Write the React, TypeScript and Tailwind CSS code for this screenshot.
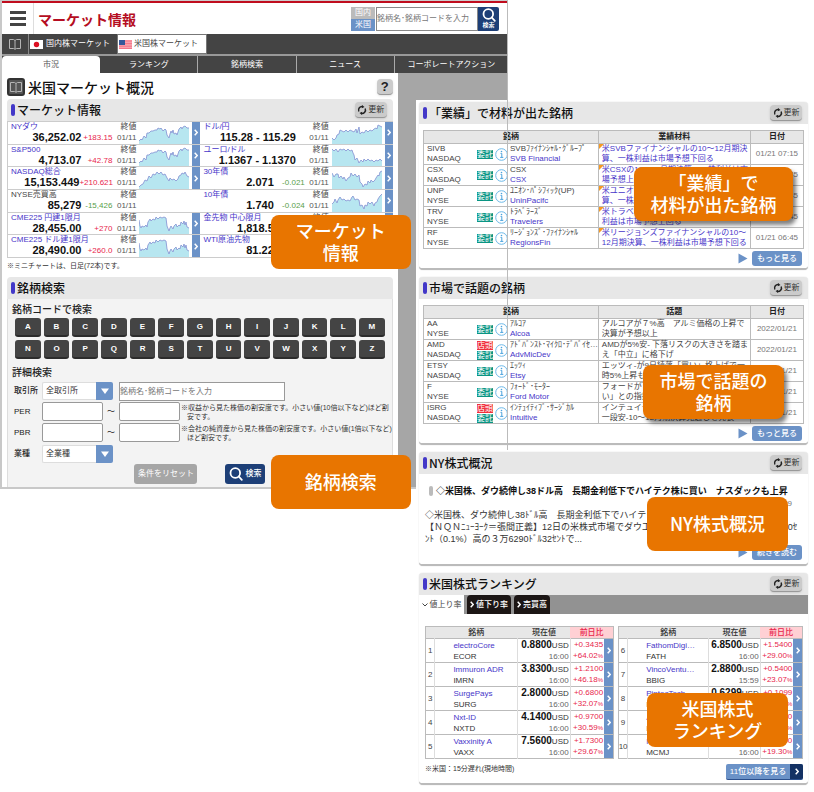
import type { ReactNode } from 'react'

const charts = {
  dow: '0,17 2,15 3,16 5,12 7,14 8,9 10,9 12,7 14,7 16,6 18,6 19,4 21,5 22,4 24,7 26,5 27,6 28,11 30,14 31,10 32,7 33,9 34,6 35,10 37,9 38,11 40,5 42,3 43,5 44,3 46,2 48,4 50,4',
  nasdaq: '0,18 2,16 4,15 6,11 8,12 10,7 12,9 14,5 16,6 18,3 20,5 22,3 24,6 26,5 28,9 30,12 31,9 33,11 35,10 37,12 39,10 40,7 42,6 43,4 45,5 46,3 48,7 50,8',
  cme: '0,6 1,12 2,14 3,12 5,13 7,11 8,13 9,8 11,5 12,7 14,5 16,6 17,3 19,5 21,3 23,4 25,3 27,4 28,12 30,17 31,14 32,12 34,15 35,12 37,10 38,13 40,11 41,12 42,8 44,10 45,7 46,11 47,8 48,13 50,14',
  usdjpy: '0,14 2,16 4,14 5,11 7,10 8,6 10,7 12,8 14,6 16,8 18,6 20,7 22,8 24,5 25,9 27,3 28,10 30,8 32,9 34,6 36,8 38,6 40,7 42,5 44,4 45,5 46,1 48,2 50,3',
  eurusd: '0,3 2,5 4,3 6,6 8,3 10,4 12,3 14,5 16,3 18,5 20,4 21,7 22,9 23,14 25,12 27,17 29,14 31,16 32,13 34,15 36,13 38,15 40,14 42,16 44,14 46,15 48,13 50,15',
  bond30: '0,4 2,8 4,5 6,5 7,9 9,7 11,10 12,8 14,12 16,9 18,8 19,4 21,7 23,5 25,8 27,6 28,13 30,15 31,18 33,15 35,16 36,12 38,14 39,11 41,13 43,11 44,9 46,6 47,7 48,3 50,2',
  bond10: '0,12 2,10 3,7 5,11 6,8 8,5 10,8 12,7 14,9 16,8 18,9 20,5 21,4 23,8 25,7 27,8 28,14 30,13 32,17 33,13 35,14 36,10 38,12 40,10 42,14 43,11 45,10 46,7 48,4 50,2',
}

const indices = [
  { name: 'NYダウ', value: '36,252.02', diff: '+183.15', chart: charts.dow },
  { name: 'S&P500', value: '4,713.07', diff: '+42.78', chart: charts.dow },
  { name: 'NASDAQ総合', value: '15,153.449', diff: '+210.621', chart: charts.nasdaq },
  { name: 'NYSE売買高', value: '85,279', diff: '-15,426', chart: '' },
  { name: 'CME225 円建1限月', value: '28,455.00', diff: '+270', chart: charts.cme },
  { name: 'CME225 ドル建1限月', value: '28,490.00', diff: '+260.0', chart: charts.cme },
]

const rates = [
  { name: 'ドル/円', value: '115.28 - 115.29', diff: '', chart: charts.usdjpy },
  { name: 'ユーロ/ドル', value: '1.1367 - 1.1370', diff: '', chart: charts.eurusd },
  { name: '30年債', value: '2.071', diff: '-0.021', chart: charts.bond30 },
  { name: '10年債', value: '1.740', diff: '-0.024', chart: charts.bond10 },
  { name: '金先物 中心限月', value: '1,818.5', diff: '+19.7', chart: charts.dow },
  { name: 'WTI原油先物', value: '81.22', diff: '+2.99', chart: charts.dow },
]

const earnings = [
  { code: 'SIVB', market: 'NASDAQ', otc: false, kana: 'SVBﾌｧｲﾅﾝｼｬﾙ･ｸﾞﾙｰﾌﾟ', name: 'SVB Financial', news: ['米SVBファイナンシャルの10～12月期決', '算、一株利益は市場予想下回る'], date: '01/21 07:15' },
  { code: 'CSX', market: 'NASDAQ', otc: false, kana: 'CSX', name: 'CSX', news: ['米CSXの10～12月期決算、一株利益は市', '場予想上回る'], date: '01/21 06:45' },
  { code: 'UNP', market: 'NYSE', otc: false, kana: 'ﾕﾆｵﾝ･ﾊﾟｼﾌｨｯｸ(UP)', name: 'UninPacifc', news: ['米ユニオン・パシフィックの10～12月期決', '算、一株利益は市場予想上回る'], date: '01/21 06:45' },
  { code: 'TRV', market: 'NYSE', otc: false, kana: 'ﾄﾗﾍﾞﾗｰｽﾞ', name: 'Travelers', news: ['米トラベラーズの10～12月期決算、一株', '利益は市場予想上回る'], date: '01/21 06:45' },
  { code: 'RF', market: 'NYSE', otc: false, kana: 'ﾘｰｼﾞｮﾝｽﾞ･ﾌｧｲﾅﾝｼｬﾙ', name: 'RegionsFin', news: ['米リージョンズファイナンシャルの10～', '12月期決算、一株利益は市場予想下回る'], date: '01/21 06:45' },
]

const topics = [
  { code: 'AA', market: 'NYSE', otc: false, kana: 'ｱﾙｺｱ', name: 'Alcoa', news: ['アルコアが７%高　アルミ価格の上昇で', '決算が予想以上'], date: '2022/01/21' },
  { code: 'AMD', market: 'NASDAQ', otc: true, kana: 'ｱﾄﾞﾊﾞﾝｽﾄ･ﾏｲｸﾛ･ﾃﾞﾊﾞｲｾ…', name: 'AdvMicDev', news: ['AMDが5%安- 下落リスクの大きさを踏ま', 'え「中立」に格下げ'], date: '2022/01/21' },
  { code: 'ETSY', market: 'NASDAQ', otc: false, kana: 'ｴｯﾂｨ', name: 'Etsy', news: ['エッツィ-が9日続落「買い」格上げで一', '時5%上昇も'], date: '2022/01/21' },
  { code: 'F', market: 'NYSE', otc: false, kana: 'ﾌｫｰﾄﾞ･ﾓｰﾀｰ', name: 'Ford Motor', news: ['フォードが下落「株価は割高で買えな', 'い」との指摘'], date: '2022/01/21' },
  { code: 'ISRG', market: 'NASDAQ', otc: true, kana: 'ｲﾝﾃｭｲﾃｨﾌﾞ･ｻｰｼﾞｶﾙ', name: 'Intuitive', news: ['インテュイティブが大幅安、売上高が', '一段安-10～12月期決算見通しを発表'], date: '2022/01/21' },
]

const gainersLeft = [
  { rank: 1, name: 'electroCore', code: 'ECOR', price: '0.8800', time: '16:00', diff: '+0.3435', pct: '+64.02' },
  { rank: 2, name: 'Immuron ADR', code: 'IMRN', price: '3.8300', time: '16:00', diff: '+1.2100', pct: '+46.18' },
  { rank: 3, name: 'SurgePays', code: 'SURG', price: '2.8000', time: '16:00', diff: '+0.6800', pct: '+32.07' },
  { rank: 4, name: 'Nxt-ID', code: 'NXTD', price: '4.1400', time: '16:00', diff: '+0.9700', pct: '+30.59' },
  { rank: 5, name: 'Vaxxinity A', code: 'VAXX', price: '7.5600', time: '16:00', diff: '+1.7300', pct: '+29.67' },
]

const gainersRight = [
  { rank: 6, name: 'FathomDigi…', code: 'FATH', price: '6.8500', time: '16:00', diff: '+1.5400', pct: '+29.00' },
  { rank: 7, name: 'VincoVentu…', code: 'BBIG', price: '2.8800', time: '15:59', diff: '+0.5400', pct: '+23.07' },
  { rank: 8, name: 'PintecTech', code: 'PT', price: '0.6299', time: '16:00', diff: '+0.1099', pct: '+21.13' },
  { rank: 9, name: 'Akerna', code: 'KERN', price: '1.5500', time: '16:00', diff: '+0.2600', pct: '+20.15' },
  { rank: 10, name: 'Merida', code: 'MCMJ', price: '6.8000', time: '16:00', diff: '+1.1000', pct: '+19.30' },
]

function BookIcon() {
  return (
    <svg width="14" height="12" viewBox="0 0 14 12" fill="none" stroke="#b5b5b5" strokeWidth="1">
      <path d="M1.5 1.5H5.5L7 2.5L8.5 1.5H12.5V10.5H8.5L7 11.3L5.5 10.5H1.5Z" />
      <path d="M7 2.5V11" />
    </svg>
  )
}

function Chevron() {
  return (
    <svg width="4" height="7" viewBox="0 0 4 7" fill="none" stroke="currentColor" strokeWidth="1.5">
      <path d="M0.7 0.8L3.2 3.5L0.7 6.2" />
    </svg>
  )
}

function SearchIcon({ size }: { size: number }) {
  return (
    <svg width={size} height={size} viewBox="0 0 14 14" fill="none" stroke="white" strokeWidth="1.8" strokeLinecap="round">
      <circle cx="6.3" cy="6" r="4.8" />
      <path d="M9.8 9.5L12.8 12.8" />
    </svg>
  )
}

function InfoIcon() {
  return (
    <svg width="13" height="13" viewBox="0 0 13 13" className="shrink-0">
      <circle cx="6.5" cy="6.5" r="5.8" fill="white" stroke="#6bb8e8" strokeWidth="1" />
      <path d="M5.5 5.4H6.8V9.3M5.2 9.4H8.3" stroke="#4aa3dd" strokeWidth="1" fill="none" />
      <circle cx="6.5" cy="3.5" r="0.8" fill="#4aa3dd" />
    </svg>
  )
}

function RefreshButton() {
  return (
    <button className="flex h-4 w-8 items-center justify-center gap-px rounded-sm border-b border-[#999] bg-[#cbcbcb] text-[8px] leading-none text-[#333] shadow-sm">
      <svg width="10" height="10" viewBox="0 0 12 12" fill="none" stroke="#222" strokeWidth="1.8">
        <path d="M2.2 7.8A4.2 4.2 0 0 1 7 2" />
        <path d="M9.8 4.2A4.2 4.2 0 0 1 5 10" />
        <path d="M6 0L9 2.4L5.8 4Z" fill="#222" stroke="none" />
        <path d="M6 12L3 9.6L6.2 8Z" fill="#222" stroke="none" />
      </svg>
      更新
    </button>
  )
}

function SectionHeader({ title }: { title: string }) {
  return (
    <div className="flex h-[22px] items-center rounded-t-sm bg-[#e7e7e7] pr-1.5 pl-1">
      <span className="mr-0.5 h-3 w-1 rounded-sm bg-[#4338c8]" />
      <h2 className="flex-1 font-['Noto_Sans_CJK_JP',sans-serif] text-[12px] leading-none font-medium text-[#111]">{title}</h2>
      <RefreshButton />
    </div>
  )
}

function Callout({ className, children }: { className: string; children: ReactNode }) {
  return (
    <div
      className={`absolute z-10 flex h-[54px] items-center justify-center rounded-lg bg-[#e87500] pb-0.5 text-center font-['Noto_Sans_CJK_JP',sans-serif] text-[18px] leading-[22px] font-medium whitespace-nowrap text-white ${className}`}
    >
      <p>{children}</p>
    </div>
  )
}

function QuoteRow({ q }: { q: (typeof indices)[number] }) {
  const plain = q.chart === ''
  const color = q.diff.startsWith('-') ? 'text-[#58a04a]' : 'text-[#e8264c]'
  return (
    <li className="flex border-b border-[#ccc] pl-[3px]">
      <div className="min-w-0 flex-1">
        <div className="flex justify-between text-[8px] leading-[10px] whitespace-nowrap text-[#444]">
          <span className={plain ? '' : 'text-[#4736c9]'}>{q.name}</span>
          <span>終値</span>
        </div>
        <div className="flex items-center justify-end leading-[11px] whitespace-nowrap">
          <b className="text-[11px] text-[#111]">{q.value}</b>
          {q.diff ? (
            <span className={`text-right text-[8px] ${color} ${q.diff.length > 7 ? 'w-[33px]' : 'w-[31px]'}`}>{q.diff}</span>
          ) : (
            <span className="w-[9px]" />
          )}
          <span className="w-6 text-right text-[8px] text-[#555]">01/11</span>
        </div>
      </div>
      <div className="mx-[3px] flex w-[50px] items-end">
        {!plain && (
          <svg width="50" height="20" viewBox="0 0 50 20">
            <polygon points={`0,20 ${q.chart} 50,20`} fill="#b7e6f0" />
            <polyline points={q.chart} fill="none" stroke="#8b9ad6" strokeWidth="0.9" />
          </svg>
        )}
      </div>
      {plain ? (
        <span className="w-2" />
      ) : (
        <button aria-label={q.name} className="flex w-2 items-center justify-center bg-[#6b92c7] text-white">
          <Chevron />
        </button>
      )}
    </li>
  )
}

function LetterButtons() {
  return (
    <div className="grid grid-cols-13 gap-[3px] px-[7px]">
      {'ABCDEFGHIJKLMNOPQRSTUVWXYZ'.split('').map((c) => (
        <button key={c} className="h-[19px] rounded-[3px] border-b-2 border-[#2c2c2c] bg-[#444] text-[8px] leading-none font-bold text-white">
          {c}
        </button>
      ))}
    </div>
  )
}

function SelectBox({ id, option }: { id: string; option: string }) {
  return (
    <span className="flex h-[18px] w-[71px]">
      <select id={id} className="min-w-0 flex-1 appearance-none rounded-l-xs border border-r-0 border-[#ddd] bg-white pl-[3px] text-[8px] text-[#333]">
        <option>{option}</option>
      </select>
      <span className="pointer-events-none flex w-[17px] items-center justify-center rounded-r-xs bg-[#6b92c7]">
        <svg width="8" height="6" viewBox="0 0 8 6">
          <path d="M0 0.5H8L4 6Z" fill="white" />
        </svg>
      </span>
    </span>
  )
}

function RangeRow({ label, note }: { label: string; note: string[] }) {
  return (
    <div className="flex h-[21px] items-center">
      <span className="w-[28px] shrink-0 text-[8px] font-medium">{label}</span>
      <input aria-label={`${label} 下限`} className="h-[19px] w-[61px] shrink-0 rounded-xs border border-[#999] bg-white px-1 text-[8px]" />
      <span className="w-4 shrink-0 text-center text-[8px]">～</span>
      <input aria-label={`${label} 上限`} className="h-[19px] w-[61px] shrink-0 rounded-xs border border-[#999] bg-white px-1 text-[8px]" />
      <p className="pl-px text-[7px] leading-[9px] whitespace-nowrap text-[#333]">
        {note[0]}
        <br />
        <span className="pl-1.5">{note[1]}</span>
      </p>
    </div>
  )
}

function MoreLink({ children }: { children: ReactNode }) {
  return (
    <div className="flex items-center justify-end gap-1 pr-1.5">
      <svg width="10" height="11" viewBox="0 0 10 11">
        <path d="M0.5 0.5L9.5 5.5L0.5 10.5Z" fill="#6b92c7" />
      </svg>
      <a href="#" className="flex h-[15px] w-[50px] items-center justify-center rounded-[3px] bg-[#6b92c7] text-[8px] leading-none font-medium whitespace-nowrap text-white">
        {children}
      </a>
    </div>
  )
}

function NewsTable({ rows, heading, linked }: { rows: typeof earnings; heading: string; linked: boolean }) {
  return (
    <table className="w-full table-fixed border-collapse text-left text-[8px] leading-[10px] text-[#444]">
      <thead>
        <tr className="h-[13px] bg-[#e7e7e7] text-center text-[#222]">
          <th className="w-[46%] border border-[#bbb] p-0 font-bold">銘柄</th>
          <th className="w-[40%] border border-[#bbb] p-0 font-bold">{heading}</th>
          <th className="w-[14%] border border-[#bbb] p-0 font-bold">日付</th>
        </tr>
      </thead>
      <tbody>
        {rows.map((r) => (
          <tr key={r.code}>
            <td className="border border-[#bbb] p-0">
              <div className="flex items-center pl-[3px]">
                <div className="w-[50px]">
                  {r.code}
                  <br />
                  {r.market}
                </div>
                <div className="w-4 text-center text-[8px] leading-[9px] text-white">
                  {r.otc && <span className="mb-px block bg-[#f0303c]">店頭</span>}
                  <span className="block bg-[#0a9583]">委託</span>
                </div>
                <button aria-label={`${r.code} 詳細`} className="mx-0.5">
                  <InfoIcon />
                </button>
                <div className="min-w-0 flex-1 whitespace-nowrap">
                  {r.kana}
                  <br />
                  <a href="#" className="text-[#4736c9]">{r.name}</a>
                </div>
              </div>
            </td>
            <td className="relative border border-[#bbb] py-0 pr-0 pl-[3px] whitespace-nowrap">
              {linked && (
                <svg width="5" height="5" viewBox="0 0 5 5" className="absolute top-0 left-0">
                  <path d="M0 0H5L0 5Z" fill="#f59a23" />
                </svg>
              )}
              {linked ? (
                <a href="#" className="text-[#4736c9]">
                  {r.news[0]}
                  <br />
                  {r.news[1]}
                </a>
              ) : (
                <>
                  {r.news[0]}
                  <br />
                  {r.news[1]}
                </>
              )}
            </td>
            <td className="border border-[#bbb] p-0 text-center whitespace-nowrap text-[#777]">{r.date}</td>
          </tr>
        ))}
      </tbody>
    </table>
  )
}

function RankingTable({ rows }: { rows: typeof gainersLeft }) {
  return (
    <table className="w-full table-fixed border-collapse border border-[#bbb] text-[8px] leading-[11px]">
      <colgroup>
        <col className="w-[5%]" />
        <col className="w-[44%]" />
        <col className="w-[28%]" />
        <col className="w-[18%]" />
        <col className="w-[5%]" />
      </colgroup>
      <thead>
        <tr className="h-3 bg-[#e7e7e7] text-[#333]">
          <th className="p-0" />
          <th className="p-0 font-medium">銘柄</th>
          <th className="p-0 font-medium">現在値</th>
          <th colSpan={2} className="bg-[#ffd0d4] p-0 font-medium text-[#e8264c]">前日比</th>
        </tr>
      </thead>
      <tbody>
        {rows.map((r) => (
          <tr key={r.rank} className="h-6 border-t border-[#bbb]">
            <td className="border-r border-[#ddd] p-0 text-[#444]">
              <span className="flex justify-center">{r.rank}</span>
            </td>
            <td className="border-r border-[#ddd] py-0 pr-0 pl-[18px] whitespace-nowrap text-[#333]">
              <a href="#" className="text-[#4736c9]">{r.name}</a>
              <br />
              {r.code}
            </td>
            <td className="border-r border-[#ddd] py-0 pr-px pl-0 text-right whitespace-nowrap text-[#666]">
              <b className="text-[10px] text-[#111]">{r.price}</b>
              <span className="text-[#333]">USD</span>
              <br />
              {r.time}
            </td>
            <td className="py-0 pr-px pl-0 text-right whitespace-nowrap text-[#e8264c]">
              {r.diff}
              <br />
              {r.pct}
              <span className="text-[6px]">%</span>
            </td>
            <td className="bg-[#6b92c7] p-0 text-white">
              <button aria-label={r.name} className="flex w-full justify-center">
                <Chevron />
              </button>
            </td>
          </tr>
        ))}
      </tbody>
    </table>
  )
}

const panel = 'relative rounded-sm border-b-2 border-[#bbb] bg-white shadow-[0_0_1px_#bbb]'

function MarketWindow() {
  return (
    <div className="border-b-2 border-l-2 border-[#c8c8c8] bg-white">
      <div className="border-t border-[#ccc]">
        <header className="flex h-[33px] items-center border-t-2 border-[#c00d1e] pr-[9px]">
          <button aria-label="メニュー" className="flex h-full w-8 flex-col items-center justify-center gap-[3px] border-r border-[#ddd]">
            <span className="h-[3px] w-4 bg-[#444]" />
            <span className="h-[3px] w-4 bg-[#444]" />
            <span className="h-[3px] w-4 bg-[#444]" />
          </button>
          <h1 className="flex-1 pl-1 font-['Noto_Sans_CJK_JP',sans-serif] text-[14px] leading-none font-bold text-[#b50d22]">マーケット情報</h1>
          <div className="mr-px flex w-6 flex-col text-[8px] leading-none text-white">
            <button className="h-3 bg-[#bbb]">国内</button>
            <button className="h-3 bg-[#6b92c7]">米国</button>
          </div>
          <input aria-label="銘柄検索" placeholder="銘柄名･銘柄コードを入力" className="h-6 w-[102px] border border-[#888] text-[8px] placeholder:text-[#777]" />
          <button className="flex h-6 w-[21px] flex-col items-center justify-center rounded-r-xs bg-[#1d3f77] text-[6px] leading-[7px] font-bold text-white">
            <SearchIcon size={14} />
            検索
          </button>
        </header>
      </div>

      <nav className="flex h-5 bg-[#444] text-[8px] leading-none">
        <a href="#" aria-label="ガイド" className="flex w-[27px] items-center justify-center border-r border-[#888]">
          <BookIcon />
        </a>
        <a href="#" className="flex w-[88px] items-center gap-[3px] pl-px whitespace-nowrap text-white">
          <svg width="13" height="9" viewBox="0 0 13 9">
            <rect width="13" height="9" fill="white" />
            <circle cx="6.5" cy="4.5" r="2.7" fill="#dd1122" />
          </svg>
          国内株マーケット
        </a>
        <a href="#" className="flex w-[90px] items-center gap-0.5 border border-[#777] bg-white pl-px whitespace-nowrap text-[#444]">
          <svg width="13" height="9" viewBox="0 0 13 9">
            <rect width="13" height="9" fill="#f9a3ac" />
            <path d="M0 1H13M0 3.6H13M0 6.2H13M0 8.5H13" stroke="#f4758a" strokeWidth="1" />
            <rect width="6" height="5" fill="#34589a" />
          </svg>
          米国株マーケット
        </a>
      </nav>
      <div className="grid h-[19px] grid-cols-[98fr_98fr_98fr_98fr_113fr] border-t-2 border-[#999] bg-[#444] text-[8px] text-white">
        <a href="#" className="flex items-center justify-center rounded-t-sm bg-white text-[#555]">市況</a>
        <a href="#" className="flex items-center justify-center border-r border-[#aaa]">ランキング</a>
        <a href="#" className="flex items-center justify-center border-r border-[#aaa]">銘柄検索</a>
        <a href="#" className="flex items-center justify-center border-r border-[#aaa]">ニュース</a>
        <a href="#" className="flex items-center justify-center">コーポレートアクション</a>
      </div>

      <div className="grid grid-cols-[395fr_110fr] bg-[#a6a6a6]">
        <main className="min-w-0 bg-white px-[5px]">
          <div className="flex h-[26px] items-center gap-[3px] pt-px">
            <span className="flex h-[18px] w-[18px] items-center justify-center rounded-[3px] border-2 border-[#333] bg-[#555]">
              <BookIcon />
            </span>
            <h2 className="flex-1 font-['Noto_Sans_CJK_JP',sans-serif] text-[14px] leading-none font-medium text-[#111]">米国マーケット概況</h2>
            <button className="h-4 w-4 rounded-sm border-b border-[#999] bg-[#cbcbcb] text-[13px] leading-none font-bold text-[#222] shadow-sm">?</button>
          </div>

          <section className="relative">
            <SectionHeader title="マーケット情報" />
            <div className="grid h-[137px] grid-cols-2 border-t border-l border-[#ccc]">
              <ul className="grid grid-rows-6">
                {indices.map((q) => <QuoteRow key={q.name} q={q} />)}
              </ul>
              <ul className="grid grid-rows-6">
                {rates.map((q) => <QuoteRow key={q.name} q={q} />)}
              </ul>
            </div>
            <p className="pt-1 pb-[7px] text-[7px] leading-[8px] text-[#333]">※ミニチャートは、日足(72本)です。</p>
            <Callout className="top-[116px] -right-[18px] w-[140px]">
              マーケット
              <br />
              情報
            </Callout>
          </section>

          <section className="relative text-[#222]">
            <div className="flex h-[22px] items-center rounded-t-sm bg-[#e7e7e7] pl-1">
              <span className="mr-0.5 h-3 w-1 rounded-sm bg-[#4338c8]" />
              <h2 className="font-['Noto_Sans_CJK_JP',sans-serif] text-[12px] leading-none font-medium text-[#111]">銘柄検索</h2>
            </div>
            <form className="border-x border-[#ddd] bg-[#f3f3f3] pb-[3px]" onSubmit={(e) => e.preventDefault()}>
              <h3 className="px-1 pt-1 pb-0.5 text-[10px] leading-[13px] font-medium">銘柄コードで検索</h3>
              <LetterButtons />
              <h3 className="px-1 pt-[7px] pb-0.5 text-[10px] leading-[13px] font-medium">詳細検索</h3>
              <div className="flex h-5 items-center pl-1.5">
                <label htmlFor="exchange" className="w-[28px] text-[8px] font-medium">取引所</label>
                <SelectBox id="exchange" option="全取引所" />
                <input aria-label="銘柄名" placeholder="銘柄名･銘柄コードを入力" className="ml-[6px] h-[19px] w-[166px] border border-[#999] bg-white text-[8px] placeholder:text-[#777]" />
              </div>
              <div className="pl-1.5">
                <RangeRow label="PER" note={['※収益から見た株価の割安度です。小さい値(10倍以下など)ほど割', '安です。']} />
                <RangeRow label="PBR" note={['※会社の純資産から見た株価の割安度です。小さい値(1倍以下など)', 'ほど割安です。']} />
              </div>
              <div className="flex h-[21px] items-center pl-1.5">
                <label htmlFor="sector" className="w-[28px] text-[8px] font-medium">業種</label>
                <SelectBox id="sector" option="全業種" />
              </div>
              <div className="flex justify-center gap-7 text-[8px] leading-none whitespace-nowrap text-white">
                <button type="reset" className="h-5 w-[63px] rounded-[3px] bg-[#a6a6a6]">条件をリセット</button>
                <button className="flex h-5 w-10 items-center justify-center gap-0.5 rounded-[3px] bg-[#1d3f77] font-medium">
                  <SearchIcon size={14} />
                  検索
                </button>
              </div>
            </form>
            <Callout className="top-[178px] -right-[18px] w-[140px]">銘柄検索</Callout>
          </section>
        </main>
      </div>
    </div>
  )
}

export default function App() {
  return (
    <div className="grid grid-cols-[minmax(0,416fr)_minmax(0,92fr)_minmax(0,306fr)] items-start bg-white pb-1 font-['Liberation_Sans','Noto_Sans_CJK_JP',sans-serif]">
      <div className="col-span-2 col-start-1 row-start-1">
        <MarketWindow />
      </div>

      <div className="col-span-2 col-start-2 row-start-1 pt-[100px]">
        <div className="flex flex-col gap-[7px] bg-white pt-0.5 pr-1.5 pl-[3px]">
          <section className={panel}>
            <SectionHeader title="「業績」で材料が出た銘柄" />
            <div className="px-1 pt-1.5 pb-0.5">
              <NewsTable rows={earnings} heading="業績材料" linked />
            </div>
            <div className="pb-0.5">
              <MoreLink>もっと見る</MoreLink>
            </div>
            <Callout className="top-[65px] right-[15px] w-[159px] shadow-[3px_4px_4px_rgba(0,0,0,0.5)]">
              「業績」で
              <br />
              材料が出た銘柄
            </Callout>
          </section>

          <section className={panel}>
            <SectionHeader title="市場で話題の銘柄" />
            <div className="px-1 pt-1.5 pb-0.5">
              <NewsTable rows={topics} heading="話題" linked={false} />
            </div>
            <div className="pb-0.5">
              <MoreLink>もっと見る</MoreLink>
            </div>
            <Callout className="top-[88px] right-[24px] w-[141px] shadow-[3px_4px_4px_rgba(0,0,0,0.5)]">
              市場で話題の
              <br />
              銘柄
            </Callout>
          </section>

          <section className={panel}>
            <SectionHeader title="NY株式概況" />
            <div className="flex items-center gap-[3px] pt-3 pl-2.5 text-[9px] leading-[10px] font-bold whitespace-nowrap text-[#111]">
              <span className="h-2.5 w-1 rounded-sm bg-[#bbb]" />
              <h3>◇米国株、ダウ続伸し38ドル高　長期金利低下でハイテク株に買い　ナスダックも上昇</h3>
            </div>
            <p className="pt-0.5 pr-4 text-right text-[8px] leading-[11px] text-[#777]">2022/01/13 07:29</p>
            <p className="pl-1.5 text-[9px] leading-[12px] whitespace-nowrap text-[#333]">
              ◇米国株、ダウ続伸し38ﾄﾞﾙ高　長期金利低下でハイテク株に買い
              <br />
              【ＮＱＮﾆｭｰﾖｰｸ＝張間正義】12日の米株式市場でダウ工業株30種平均は続伸して、38ﾄﾞﾙ30ｾ
              <br />
              ﾝﾄ（0.1%）高の３万6290ﾄﾞﾙ32ｾﾝﾄで...
            </p>
            <div className="pb-1">
              <MoreLink>続きを読む</MoreLink>
            </div>
            <Callout className="top-[45px] right-5 w-[141px]">NY株式概況</Callout>
          </section>

          <section className={panel}>
            <SectionHeader title="米国株式ランキング" />
            <div className="flex h-[19px] gap-[3px] bg-[#929292] text-[8px] leading-none">
              <button className="flex w-[45px] items-center justify-center gap-0.5 bg-white text-[#444]">
                <svg width="6" height="4" viewBox="0 0 6 4" fill="none" stroke="currentColor">
                  <path d="M0.5 0.5L3 3L5.5 0.5" />
                </svg>
                値上り率
              </button>
              <button className="flex w-11 items-center justify-center gap-0.5 rounded-t-sm bg-[#1c1615] font-medium text-white">
                <Chevron />
                値下り率
              </button>
              <button className="flex w-9 items-center justify-center gap-0.5 rounded-t-sm bg-[#1c1615] font-medium text-white">
                <Chevron />
                売買高
              </button>
            </div>
            <div className="grid grid-cols-[189fr_185fr] gap-1 pt-3 pr-[5px] pl-1.5">
              <RankingTable rows={gainersLeft} />
              <RankingTable rows={gainersRight} />
            </div>
            <div className="flex items-start justify-between pt-[5px] pr-[5px] pb-[3px] pl-1.5">
              <p className="text-[7px] leading-[9px] text-[#333]">※米国：15分遅れ(現地時間)</p>
              <a href="#" className="flex h-4 w-[77px] overflow-hidden rounded-xs border-b border-[#2b4f8c] bg-[#6b92c7] text-[8px] leading-none font-medium whitespace-nowrap text-white">
                <span className="flex flex-1 items-center justify-center">11位以降を見る</span>
                <span className="flex w-[13px] items-center justify-center bg-[#143264]">
                  <Chevron />
                </span>
              </a>
            </div>
            <Callout className="top-[120px] right-5 w-[141px]">
              米国株式
              <br />
              ランキング
            </Callout>
          </section>
        </div>
      </div>

      {/* right edge of the market window, runs on over the panels */}
      <div className="pointer-events-none relative z-[5] col-start-2 row-start-1 h-[450px] border-r border-[#bbb]" />
    </div>
  )
}
